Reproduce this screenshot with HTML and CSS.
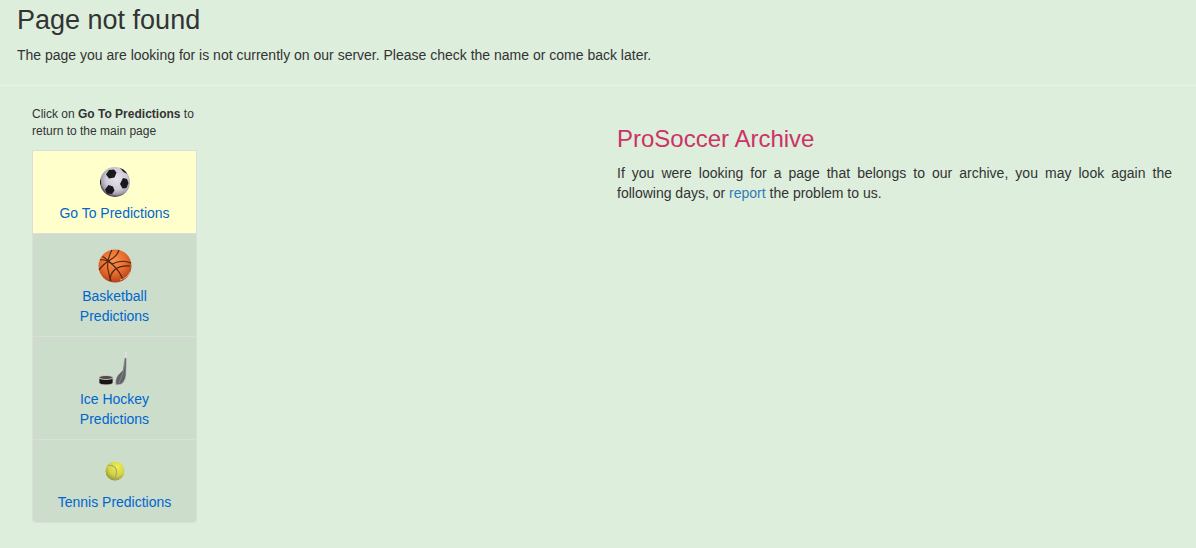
FILE: index.html
```html
<!DOCTYPE html>
<html lang="en">
<head>
    <meta charset="UTF-8">
    <meta name="viewport" content="width=device-width, initial-scale=1.0">
    <title>Page not found</title>

    <link rel="stylesheet" href="styles.css">
</head>
<body>
    <header class="page-header">
        <h1>Page not found</h1>
        <p>The page you are looking for is not currently on our server. Please check the name or come back later.</p>
    </header>

    <main class="row">
        <div class="sidebar">
            <p class="hint">Click on <strong>Go To Predictions</strong> to return to the main page</p>
            <nav class="list-group">
                <a href="#" class="list-item active">
                    <svg class="icon" width="42" height="42" viewBox="0 0 42 42" aria-hidden="true">
                        <defs>
                            <radialGradient id="soccer" cx="0.55" cy="0.4" r="0.6">
                                <stop offset="0" stop-color="#e6e2ea"/>
                                <stop offset="0.6" stop-color="#cfcad6"/>
                                <stop offset="0.85" stop-color="#a39cab"/>
                                <stop offset="1" stop-color="#3f3946"/>
                            </radialGradient>
                            <clipPath id="soccerClip"><circle cx="21" cy="21" r="15"/></clipPath>
                        </defs>
                        <circle cx="21" cy="21" r="15" fill="url(#soccer)"/>
                        <g clip-path="url(#soccerClip)" fill="#17191e">
                            <path d="M15 9l5-.5 2.500 3-2 5-5.500 1-3-4z"/>
                            <path d="M29 17l4 1 1.500 4-2 5-4 .5-2.500-4.500z"/>
                            <path d="M14.500 24l4.500 1.500 1.500 4-2.500 3.500-5-.5-2-4z"/>
                            <path d="M26 7l5 1.500 2.500 4.500-4-2z"/>
                            <path d="M5 18l2 1v4l-2 2z"/>
                        </g>
                    </svg>
                    <span>Go To Predictions</span>
                </a>
                <a href="#" class="list-item">
                    <svg class="icon" width="42" height="42" viewBox="0 0 42 42" aria-hidden="true">
                        <defs>
                            <radialGradient id="basket" cx="0.45" cy="0.35" r="0.65">
                                <stop offset="0" stop-color="#f89350"/>
                                <stop offset="0.6" stop-color="#e66a2a"/>
                                <stop offset="1" stop-color="#b5421a"/>
                            </radialGradient>
                        </defs>
                        <circle cx="21" cy="22" r="16.500" fill="url(#basket)"/>
                        <g fill="none" stroke="#4c2412" stroke-width="1.100">
                            <path d="M8.500 12.500C13 15 17 19 20 22c4 4 7 8 9 14"/>
                            <path d="M5 26c4-6 9-9 14-12 3-2 5-4 6-8"/>
                            <path d="M18 6c-4 7-5 14-4 20 1 5 2 8 3 11"/>
                            <path d="M6 16c4-1 8 1 12 4 6-3 12-4 19-1"/>
                            <path d="M16 37c0-9 6-16 20-15"/>
                        </g>
                        <path d="M26 36c5-1 8-4 10-8" fill="none" stroke="#ee9b81"/>
                    </svg>
                    <span>Basketball Predictions</span>
                </a>
                <a href="#" class="list-item">
                    <svg class="icon" width="42" height="42" viewBox="0 0 42 42" aria-hidden="true">
                        <path d="M31 5l2-1-.5 10h-2z" fill="#e2dde0"/>
                        <path d="M30.500 11h2L32 28c-.5 5-3 9-6 9.500l-4 .5c-1-5 .5-9 4-12 2-2 3.500-3 3.500-6z" fill="#626567" stroke="#c9c8c8" stroke-width="0.600"/>
                        <path d="M31 14l-2 12-4 10" fill="none" stroke="#818484"/>
                        <path d="M5 31v5c1 2.500 13 2.500 14 0v-5z" fill="#171515" stroke="#d9d2cf" stroke-width="0.800"/>
                        <ellipse cx="12" cy="30.500" rx="7" ry="2" fill="#514b4b" stroke="#ded7d3" stroke-width="0.800"/>
                    </svg>
                    <span>Ice Hockey Predictions</span>
                </a>
                <a href="#" class="list-item">
                    <svg class="icon" width="42" height="42" viewBox="0 0 42 42" aria-hidden="true">
                        <defs>
                            <radialGradient id="tennis" cx="0.6" cy="0.3" r="0.75">
                                <stop offset="0" stop-color="#f0ef52"/>
                                <stop offset="0.6" stop-color="#d2d243"/>
                                <stop offset="1" stop-color="#8d8d35"/>
                            </radialGradient>
                        </defs>
                        <circle cx="21" cy="21" r="9.500" fill="url(#tennis)"/>
                        <path d="M14 15.500c5-1 8.500 2 8.500 6 0 3-1.500 5-1 8.500" fill="none" stroke="#aaa777" stroke-width="1.200"/>
                    </svg>
                    <span>Tennis Predictions</span>
                </a>
            </nav>
        </div>

        <section class="archive">
            <h2>ProSoccer Archive</h2>
            <p>If you were looking for a page that belongs to our archive, you may look again the following days, or <a href="#">report</a> the problem to us.</p>
        </section>
    </main>
</body>
</html>
```
FILE: styles.css
```css
* {
    box-sizing: border-box;
}

body {
    margin: 0;
    background: #ddeedd;
    color: #333;
    font-family: "Liberation Sans", Arial, sans-serif;
    font-size: 14px;
    line-height: 20px;
}

h1, h2 {
    margin: 0 0 10px;
    font-weight: 400;
}

p {
    margin: 0 0 10px;
}

a {
    color: #337ab7;
    text-decoration: none;
}

/* Header */
.page-header {
    padding: 5px 17px 10px;
    border-bottom: 1px solid #eee;
}

h1 {
    font-size: 27px;
    line-height: 30px;
}

/* Columns */
.row {
    display: grid;
    grid-template-columns: 2fr 4fr 6fr;
    padding: 20px 9px 20px 17px;
}

.sidebar {
    padding: 0 15px;
}

.hint {
    font-size: 12px;
    line-height: 17px;
}

/* Sports list */
.list-group {
    border: 1px solid #ddd;
    border-radius: 0 0 4px 4px;
    background: #ccddcc;
}

.list-item {
    display: block;
    padding: 10px 15px;
    color: #0066cc;
    text-align: center;
}

.list-item + .list-item {
    border-top: 1px solid #ddd;
}

.list-item.active,
.list-item:hover {
    background: #ffffcc;
}

.icon {
    display: block;
    margin: 0 auto;
}

/* Archive notice */
.archive {
    grid-column: 3;
    padding: 20px 15px 0;
    text-align: justify;
}

.archive h2 {
    margin-bottom: 12px;
    color: #cc3366;
    font-size: 24px;
    line-height: 25px;
}
```
